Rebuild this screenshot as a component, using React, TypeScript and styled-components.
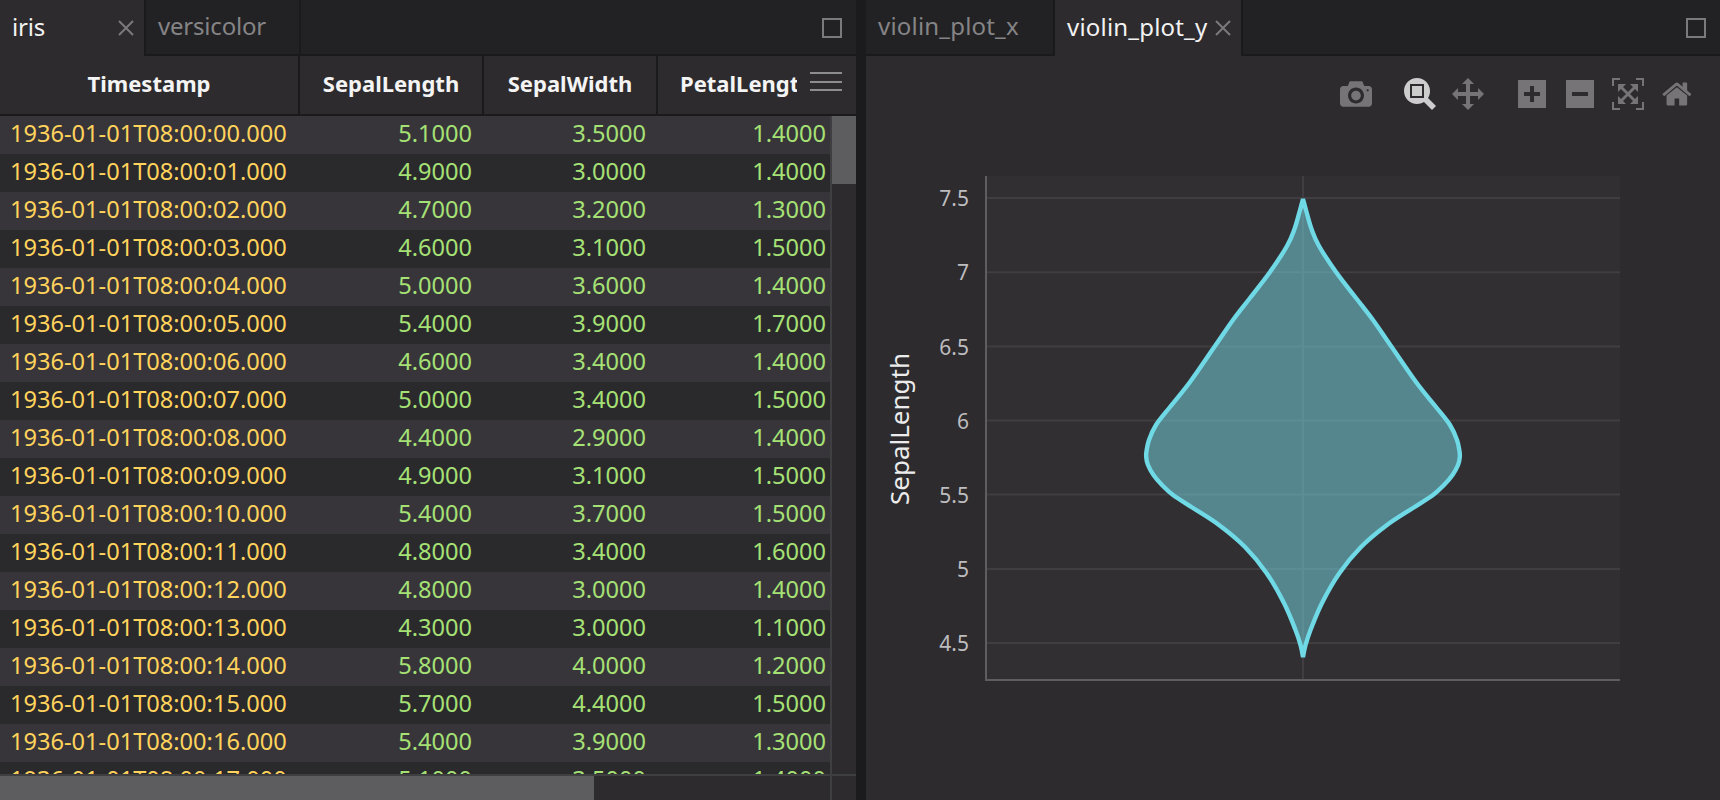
import React from "react";
import styled, { createGlobalStyle } from "styled-components";

const Global = createGlobalStyle`
  html, body { margin: 0; padding: 0; background: #1b1a1c; }
  body { width: 1720px; height: 800px; overflow: hidden; font-family: "Noto Sans", "Open Sans", sans-serif; }
`;

const Page = styled.div`
  display: grid;
  grid-template-columns: 856px 854px;
  column-gap: 10px;
  width: 1720px;
  height: 800px;
`;
const Panel = styled.section`
  display: flex;
  flex-direction: column;
  min-width: 0;
  height: 800px;
  background: #2d2b2e;
`;
const TabBar = styled.div`
  display: flex;
  flex: none;
  height: 54px;
  background: #222224;
  border-bottom: 2px solid #1a191b;
  position: relative;
`;
const Tab = styled.div<{ $active?: boolean; $w: number }>`
  display: flex;
  align-items: center;
  justify-content: space-between;
  box-sizing: border-box;
  width: ${(p) => p.$w}px;
  height: ${(p) => (p.$active ? 56 : 54)}px;
  padding: 0 ${(p) => (p.$active ? 10 : 0)}px 4px 12px;
  background: ${(p) => (p.$active ? "#2d2b2e" : "#222224")};
  color: ${(p) => (p.$active ? "#f2f2f2" : "#858486")};
  border-right: 2px solid #1a191b;
  font-size: 24px;
  letter-spacing: -0.2px;
  white-space: nowrap;
`;
const PlotTab = styled(Tab)`
  letter-spacing: 0.2px;
`;
const CloseIcon = styled.svg`
  flex: none;
  width: 16px;
  height: 16px;
  margin-top: 4px;
`;
const Maximize = styled.div`
  position: absolute;
  top: 18px;
  right: 14px;
  box-sizing: border-box;
  width: 20px;
  height: 20px;
  border: 2px solid #7b7a7c;
`;

const HeaderRow = styled.div`
  display: grid;
  grid-template-columns: 300px 184px 174px 198px;
  flex: none;
  height: 60px;
  box-sizing: border-box;
  border-bottom: 2px solid #1a191b;
  position: relative;
`;
const HeaderCell = styled.div<{ $left?: number }>`
  box-sizing: border-box;
  overflow: hidden;
  padding-left: ${(p) => p.$left ?? 0}px;
  text-align: ${(p) => (p.$left ? "left" : "center")};
  border-right: 2px solid #1a191b;
  color: #f4f4f4;
  font-size: 22px;
  font-weight: 700;
  line-height: 55px;
  white-space: nowrap;
`;
const HeaderClip = styled(HeaderCell)`
  border-right: 0;
  padding-right: 59px;
`;
const HeaderText = styled.span`
  display: block;
  overflow: hidden;
`;
const MenuIcon = styled.div`
  position: absolute;
  top: 16px;
  right: 14px;
  box-sizing: border-box;
  width: 32px;
  height: 19px;
  border-top: 2px solid #8d8c8e;
  border-bottom: 2px solid #8d8c8e;
  &::after {
    content: "";
    display: block;
    height: 2px;
    margin-top: 6.5px;
    background: #8d8c8e;
  }
`;
const TableBody = styled.div`
  display: grid;
  grid-template-columns: 830px 26px;
  grid-template-rows: 658px 26px;
  flex: none;
`;
const Rows = styled.div`
  overflow: hidden;
`;
const Row = styled.div<{ $odd: boolean }>`
  display: grid;
  grid-template-columns: 300px 184px 174px 172px;
  height: 38px;
  background: ${(p) => (p.$odd ? "#2a292c" : "#373539")};
  font-size: 23.6px;
  line-height: 34px;
  white-space: nowrap;
`;
const TimeCell = styled.div`
  padding-left: 10px;
  color: #ffd35c;
`;
const NumberCell = styled.div<{ $right: number }>`
  padding-right: ${(p) => p.$right}px;
  text-align: right;
  color: #a6e175;
`;
const VTrack = styled.div`
  box-sizing: border-box;
  border-left: 2px solid #3f3e41;
`;
const VThumb = styled.div`
  height: 68px;
  background: #5d5c5f;
`;
const HTrack = styled.div`
  box-sizing: border-box;
  border-top: 2px solid #3f3e41;
`;
const HThumb = styled.div`
  width: 594px;
  height: 24px;
  background: #5d5c5f;
`;
const Corner = styled.div`
  box-sizing: border-box;
  border-top: 2px solid #3f3e41;
  border-left: 2px solid #3f3e41;
`;

const ModeBar = styled.div`
  display: flex;
  flex: none;
  justify-content: flex-end;
  box-sizing: border-box;
  height: 54px;
  padding: 22px 28px 0 0;
`;
const ModeBtn = styled.svg<{ $ml: number; $on?: boolean }>`
  flex: none;
  height: 32px;
  margin-left: ${(p) => p.$ml}px;
  fill: ${(p) => (p.$on ? "#cdcdcd" : "#767477")};
`;
const ChartSvg = styled.svg`
  display: block;
  flex: 1;
  width: 854px;
  min-height: 0;
`;

const data = [
  ["00", "5.1000", "3.5000", "1.4000"], ["01", "4.9000", "3.0000", "1.4000"],
  ["02", "4.7000", "3.2000", "1.3000"], ["03", "4.6000", "3.1000", "1.5000"],
  ["04", "5.0000", "3.6000", "1.4000"], ["05", "5.4000", "3.9000", "1.7000"],
  ["06", "4.6000", "3.4000", "1.4000"], ["07", "5.0000", "3.4000", "1.5000"],
  ["08", "4.4000", "2.9000", "1.4000"], ["09", "4.9000", "3.1000", "1.5000"],
  ["10", "5.4000", "3.7000", "1.5000"], ["11", "4.8000", "3.4000", "1.6000"],
  ["12", "4.8000", "3.0000", "1.4000"], ["13", "4.3000", "3.0000", "1.1000"],
  ["14", "5.8000", "4.0000", "1.2000"], ["15", "5.7000", "4.4000", "1.5000"],
  ["16", "5.4000", "3.9000", "1.3000"], ["17", "5.1000", "3.5000", "1.4000"],
];

const icons = [
  { w: 1000, ml: 0, d: "m500 450c-83 0-150-67-150-150 0-83 67-150 150-150 83 0 150 67 150 150 0 83-67 150-150 150z m400 150h-120c-16 0-34 13-39 29l-31 93c-6 15-23 28-40 28h-340c-16 0-34-13-39-28l-31-94c-6-15-23-28-40-28h-120c-55 0-100-45-100-100v-450c0-55 45-100 100-100h800c55 0 100 45 100 100v450c0 55-45 100-100 100z m-400-550c-138 0-250 112-250 250 0 138 112 250 250 250 138 0 250-112 250-250 0-138-112-250-250-250z m365 380c-19 0-35 16-35 35 0 19 16 35 35 35 19 0 35-16 35-35 0-19-16-35-35-35z" },
  { w: 1000, ml: 32, on: true, d: "m1000-25l-250 251c40 63 63 138 63 218 0 224-182 406-407 406-224 0-406-182-406-406s183-406 407-406c80 0 155 22 218 62l250-250 125 125z m-812 250l0 438 437 0 0-438-437 0z m62 375l313 0 0-312-313 0 0 312z" },
  { w: 1000, ml: 16, d: "m1000 350l-187 188 0-125-250 0 0 250 125 0-188 187-187-187 125 0 0-250-250 0 0 125-188-188 186-187 0 125 252 0 0-250-125 0 187-188 188 188-125 0 0 250 250 0 0-126 187 188z" },
  { w: 875, ml: 34, d: "m1 787l0-875 875 0 0 875-875 0z m687-500l-187 0 0-187-125 0 0 187-188 0 0 125 188 0 0 187 125 0 0-187 187 0 0-125z" },
  { w: 875, ml: 20, d: "m0 788l0-876 875 0 0 876-875 0z m688-500l-500 0 0 125 500 0 0-125z" },
  { w: 1000, ml: 18, d: "m250 850l-187 0-63 0 0-62 0-188 63 0 0 188 187 0 0 62z m688 0l-188 0 0-62 188 0 0-188 62 0 0 188 0 62-62 0z m-875-938l0 188-63 0 0-188 0-62 63 0 187 0 0 62-187 0z m875 188l0-188-188 0 0-62 188 0 62 0 0 62 0 188-62 0z m-125 188l-1 0-93-94-156 156 156 156 92-93 2 0 0 250-250 0 0-2 93-92-156-156-156 156 94 92 0 2-250 0 0-250 0 0 93 93 157-156-157-156-93 94 0 0 0-250 250 0 0 0-94 93 156 157 156-157-93-93 0 0 250 0 0 250z" },
  { w: 928.6, ml: 18, d: "m786 296v-267q0-15-11-26t-25-10h-214v214h-143v-214h-214q-15 0-25 10t-11 26v267q0 1 0 2t0 2l321 264 321-264q1-1 1-4z m124 39l-34-41q-5-5-12-6h-2q-7 0-12 3l-386 322-386-322q-7-4-13-4-7 2-12 7l-35 41q-4 5-3 13t6 12l401 334q18 15 42 15t43-15l136-114v109q0 8 5 13t13 5h107q8 0 13-5t5-13v-227l122-102q5-5 6-12t-4-13z" },
];

// Right half of the violin as [page y, half-width in px].
const profile: [number, number][] = [
  [199, 0], [212, 3.5], [229, 8.5], [246, 16], [272, 33], [298, 53], [320, 70], [346, 88],
  [382, 113], [407, 133], [425, 147], [440, 154], [450, 156.3], [457, 156.8], [465, 155], [475, 149.5],
  [485, 141], [495, 130], [508, 110], [525, 84], [547, 58], [573, 36.5], [603, 19], [630, 7.5], [645, 2.5], [657, 0],
];

function splineThrough(pts: number[][]) {
  let d = "";
  for (let i = 0; i < pts.length - 1; i++) {
    const p0 = pts[Math.max(i - 1, 0)];
    const p1 = pts[i];
    const p2 = pts[i + 1];
    const p3 = pts[Math.min(i + 2, pts.length - 1)];
    const c1 = [p1[0] + (p2[0] - p0[0]) / 6, p1[1] + (p2[1] - p0[1]) / 6];
    const c2 = [p2[0] - (p3[0] - p1[0]) / 6, p2[1] - (p3[1] - p1[1]) / 6];
    d += `C${c1[0].toFixed(1)} ${c1[1].toFixed(1)} ${c2[0].toFixed(1)} ${c2[1].toFixed(1)} ${p2[0].toFixed(1)} ${p2[1].toFixed(1)}`;
  }
  return d;
}

function violinPath() {
  const cx = 1303;
  const right = profile.map(([y, x]) => [cx + x, y]);
  const left = [...profile].reverse().map(([y, x]) => [cx - x, y]);
  return `M${right[0][0]} ${right[0][1]}${splineThrough(right)}${splineThrough(left)}Z`;
}

const ticks = [
  ["7.5", 198], ["7", 272.3], ["6.5", 346.5], ["6", 420.5], ["5.5", 494.5], ["5", 569], ["4.5", 643],
] as [string, number][];

const Close = () => (
  <CloseIcon viewBox="0 0 16 16">
    <path d="M1 1L15 15M15 1L1 15" stroke="#7a797b" strokeWidth="2" />
  </CloseIcon>
);

export default function App() {
  return (
    <>
      <Global />
      <Page>
        <Panel>
          <TabBar>
            <Tab $active $w={146}>iris<Close /></Tab>
            <Tab $w={155}>versicolor</Tab>
            <Maximize />
          </TabBar>
          <HeaderRow>
            <HeaderCell>Timestamp</HeaderCell>
            <HeaderCell>SepalLength</HeaderCell>
            <HeaderCell>SepalWidth</HeaderCell>
            <HeaderClip $left={22}><HeaderText>PetalLength</HeaderText></HeaderClip>
            <MenuIcon />
          </HeaderRow>
          <TableBody>
            <Rows>
              {data.map((r, i) => (
                <Row key={r[0]} $odd={i % 2 === 1}>
                  <TimeCell>{`1936-01-01T08:00:${r[0]}.000`}</TimeCell>
                  <NumberCell $right={12}>{r[1]}</NumberCell>
                  <NumberCell $right={12}>{r[2]}</NumberCell>
                  <NumberCell $right={4}>{r[3]}</NumberCell>
                </Row>
              ))}
            </Rows>
            <VTrack><VThumb /></VTrack>
            <HTrack><HThumb /></HTrack>
            <Corner />
          </TableBody>
        </Panel>
        <Panel>
          <TabBar>
            <PlotTab $w={189}>violin_plot_x</PlotTab>
            <PlotTab $active $w={188}>violin_plot_y<Close /></PlotTab>
            <Maximize />
          </TabBar>
          <ModeBar>
            {icons.map((ic, i) => (
              <ModeBtn key={i} $ml={ic.ml} $on={ic.on} width={(ic.w * 32) / 1000} viewBox={`0 0 ${ic.w} 1000`}>
                <path transform="matrix(1 0 0 -1 0 850)" d={ic.d} />
              </ModeBtn>
            ))}
          </ModeBar>
          <ChartSvg viewBox="866 110 854 690" fontFamily="'Noto Sans', sans-serif">
            <rect x={985} y={176} width={635} height={504} fill="#322f33" />
            {ticks.map(([t, y]) => (
              <g key={t}>
                <line x1={986} x2={1620} y1={y} y2={y} stroke="#413e42" strokeWidth={2} />
                <text x={969} y={y + 8} textAnchor="end" fontSize={21} fill="#bdbcbe">{t}</text>
              </g>
            ))}
            <line x1={1303} x2={1303} y1={176} y2={680} stroke="#413e42" strokeWidth={2} />
            <path d={violinPath()} fill="rgba(120,220,232,0.5)" stroke="#6fd9e6" strokeWidth={4.4} strokeLinejoin="bevel" />
            <line x1={986} x2={986} y1={176} y2={681} stroke="#5f5d60" strokeWidth={2} />
            <line x1={985} x2={1620} y1={680} y2={680} stroke="#5f5d60" strokeWidth={2} />
            <text transform="translate(909 429) rotate(-90)" textAnchor="middle" fontSize={26} fill="#ececec">SepalLength</text>
          </ChartSvg>
        </Panel>
      </Page>
    </>
  );
}
